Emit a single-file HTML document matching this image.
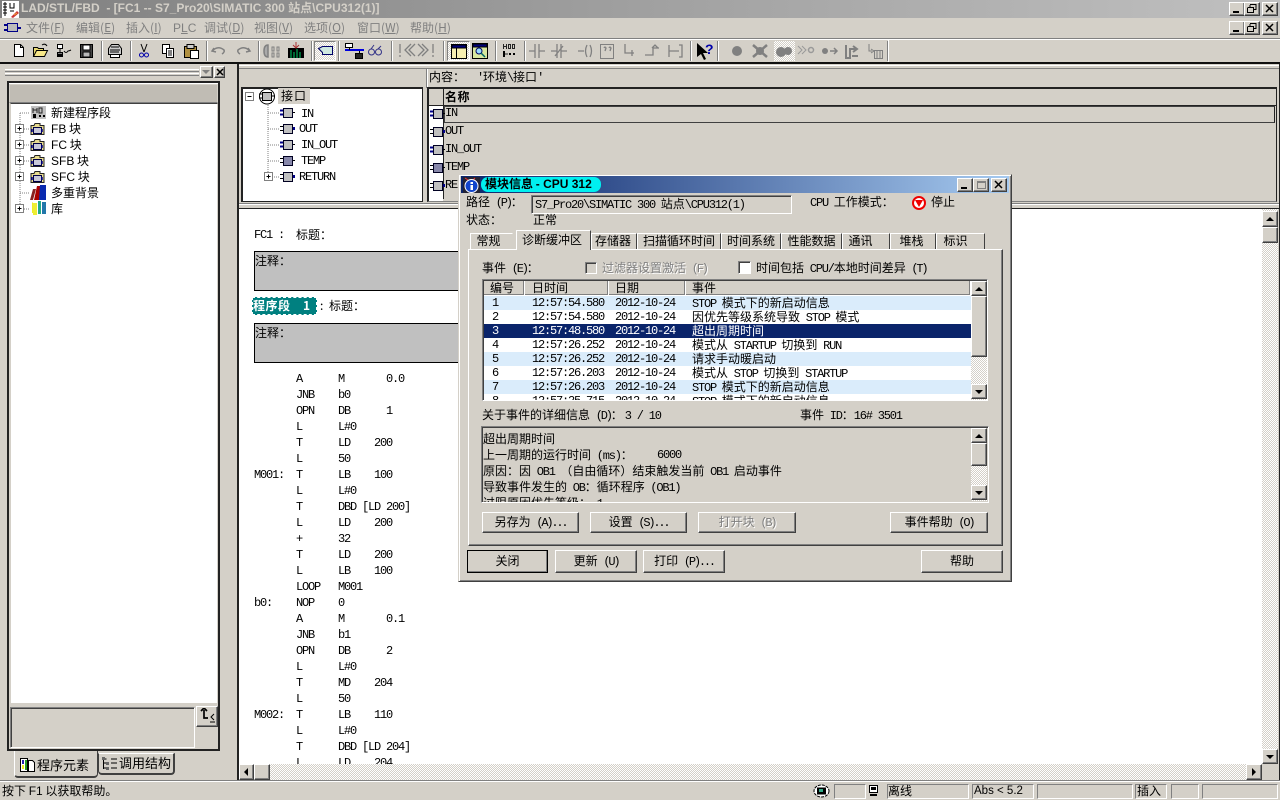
<!DOCTYPE html>
<html><head><meta charset="utf-8"><style>
html,body{margin:0;padding:0;width:1280px;height:800px;overflow:hidden;background:#d4d0c8}
body{position:relative;font:12px/16px "WenQuanYi Zen Hei","Noto Sans CJK SC","Liberation Sans",sans-serif;color:#000;word-spacing:3px}
div,span.a,svg.a{position:absolute;box-sizing:border-box}
.t{white-space:nowrap;line-height:16px;height:16px}
.m{font-family:"Liberation Mono",monospace;letter-spacing:-1.2px;word-spacing:0}
.n{font-family:"Liberation Mono",monospace;letter-spacing:-2.2px;word-spacing:0}
.s{font-family:"Liberation Sans",sans-serif;word-spacing:0}
.w0{word-spacing:0}
.r{background:#d4d0c8;border:1px solid;border-color:#fff #404040 #404040 #fff;box-shadow:inset -1px -1px #808080}
.k{border:1px solid;border-color:#808080 #fff #fff #808080;box-shadow:inset 1px 1px #404040}
.k1{border:1px solid;border-color:#808080 #fff #fff #808080}
.d{background:repeating-conic-gradient(#fff 0 25%,#d4d0c8 0 50%) 0 0/2px 2px}
.b{text-align:center;line-height:18px}
.g{color:#808080;text-shadow:1px 1px 0 #fff}
.menu{color:#808080}
.rw{left:484px;width:487px;height:14px;overflow:visible}
.rw .t{top:-1px}
.tab{border:1px solid;border-color:#fff #404040 transparent #fff;background:#d4d0c8;text-align:center;border-bottom:0;line-height:14px;white-space:nowrap}
.arrow{width:0;height:0;border:4px solid transparent}
.sep{width:2px;top:41px;height:20px;border-left:1px solid #808080;border-right:1px solid #fff}
.wb{width:16px;height:14px}
</style></head><body>

<!-- title bar -->
<div style="left:0;top:0;width:1280px;height:18px;background:linear-gradient(90deg,#808080,#c0c0c0)"></div>
<div class="t s" style="left:21px;top:0;color:#d4d0c8;font-weight:bold;font-size:12px">LAD/STL/FBD&nbsp; - [FC1 -- S7_Pro20\SIMATIC 300 <span style="font-family:'WenQuanYi Zen Hei','Noto Sans CJK SC',sans-serif">站点</span>\CPU312(1)]</div>
<svg class="a" style="left:2px;top:1px" width="17" height="17"><rect width="17" height="17" fill="#fff"/><path d="M1 3h4M1 6h4M1 9h4M1 12h4M3 1v14M8 2v5h4V2M8 10h4" stroke="#000" fill="none"/><path d="M9 16l6-6 2 2-6 5z" fill="#c33"/><path d="M12 14l3-2" stroke="#ea3"/></svg>
<!-- window buttons row 1 -->
<div class="r wb" style="left:1229px;top:2px"><div style="left:3px;top:8px;width:6px;height:2px;background:#000"></div></div>
<div class="r wb" style="left:1244px;top:2px"><svg class="a" style="left:2px;top:1px" width="10" height="9"><path d="M3 .5h6v5H7M1 3.500h5.500v5H.5v-5M3 1v2" fill="none" stroke="#000"/></svg></div>
<div class="r wb" style="left:1262px;top:2px"><svg class="a" style="left:2px;top:1px" width="10" height="9"><path d="M1 1l7 7M8 1l-7 7" stroke="#000" stroke-width="1.500"/></svg></div>
<!-- window buttons row 2 -->
<div class="r wb" style="left:1229px;top:21px"><div style="left:3px;top:8px;width:6px;height:2px;background:#000"></div></div>
<div class="r wb" style="left:1244px;top:21px"><svg class="a" style="left:2px;top:1px" width="10" height="9"><path d="M3 .5h6v5H7M1 3.500h5.500v5H.5v-5M3 1v2" fill="none" stroke="#000"/></svg></div>
<div class="r wb" style="left:1262px;top:21px"><svg class="a" style="left:2px;top:1px" width="10" height="9"><path d="M1 1l7 7M8 1l-7 7" stroke="#000" stroke-width="1.500"/></svg></div>

<!-- menu -->
<svg class="a" style="left:4px;top:21px" width="17" height="14"><path d="M0 4h3M0 9h3M14 7h3" stroke="#008" stroke-width="2"/><rect x="3.500" y="2.500" width="10" height="8" fill="#bbb" stroke="#008"/></svg>
<div class="t menu" style="left:26px;top:20px">文件(<u>F</u>)</div>
<div class="t menu" style="left:76px;top:20px">编辑(<u>E</u>)</div>
<div class="t menu" style="left:126px;top:20px">插入(<u>I</u>)</div>
<div class="t menu s" style="left:173px;top:20px;font-size:12px">P<u>L</u>C</div>
<div class="t menu" style="left:204px;top:20px">调试(<u>D</u>)</div>
<div class="t menu" style="left:254px;top:20px">视图(<u>V</u>)</div>
<div class="t menu" style="left:304px;top:20px">选项(<u>O</u>)</div>
<div class="t menu" style="left:357px;top:20px">窗口(<u>W</u>)</div>
<div class="t menu" style="left:410px;top:20px">帮助(<u>H</u>)</div>
<div style="left:0;top:38px;width:1280px;height:1px;background:#808080"></div>
<div style="left:0;top:39px;width:1280px;height:1px;background:#fff"></div>

<!-- toolbar -->
<div class="sep" style="left:101px"></div><div class="sep" style="left:130px"></div><div class="sep" style="left:206px"></div><div class="sep" style="left:258px"></div><div class="sep" style="left:311px"></div><div class="sep" style="left:338px"></div><div class="sep" style="left:391px"></div><div class="sep" style="left:443px"></div><div class="sep" style="left:495px"></div><div class="sep" style="left:524px"></div><div class="sep" style="left:690px"></div><div class="sep" style="left:717px"></div><div class="sep" style="left:887px"></div>
<div style="left:314px;top:41px;width:22px;height:20px;background:repeating-conic-gradient(#fff 0 25%,#d4d0c8 0 50%) 0 0/2px 2px;border:1px solid;border-color:#808080 #fff #fff #808080"></div>
<div style="left:447px;top:41px;width:23px;height:20px;background:repeating-conic-gradient(#fff 0 25%,#d4d0c8 0 50%) 0 0/2px 2px;border:1px solid;border-color:#808080 #fff #fff #808080"></div>
<div style="left:774px;top:41px;width:21px;height:20px;background:repeating-conic-gradient(#fff 0 25%,#d4d0c8 0 50%) 0 0/2px 2px"></div>
<svg class="a" style="left:0;top:40px" width="900" height="22">
<g fill="none" stroke="#000">
<path d="M14.500 4.500h6l3 3v9h-9z" fill="#fff"/><path d="M20.500 4.500v3h3"/>
<path d="M33.500 16.500v-9h4l1 1h5v8z" fill="#e8d870"/><path d="M33.500 16.500l3-6h11l-3 6z" fill="#f8e888"/><path d="M42 5q3-2 5 1" stroke="#000"/>
<path d="M57.500 4.500h5v4h-5zM57.500 12.500h5v4h-5z" fill="#fff"/><rect x="58" y="14" width="4" height="2" fill="#000"/><path d="M60 9v3M64 11q2 3 4 0q1 0 3-1"/>
<path d="M80.500 4.500h12v13h-12z" fill="#444"/><rect x="83" y="5" width="7" height="5" fill="#fff"/><rect x="83" y="12" width="7" height="5" fill="#b8b8b8"/>
<path d="M108.500 8.500l3-4h7l3 4v6h-13z" fill="#ccc"/><path d="M110.500 14.500h9v3h-9z" fill="#fff"/><path d="M111 7h8M110 10h10M110 12h9"/>
</g>
<path d="M141 4l3 8M147 4l-3 8" stroke="#000" fill="none"/><circle cx="141.500" cy="15" r="2" fill="none" stroke="#00a"/><circle cx="146.500" cy="15" r="2" fill="none" stroke="#00a"/>
<g fill="#fff" stroke="#000"><path d="M162.500 4.500h7v9h-7z"/><path d="M166.500 8.500h7v9h-7z"/><path d="M168 11h4M168 13h4M168 15h4" fill="none"/></g>
<g stroke="#000"><path d="M184.500 6.500h12v11h-12z" fill="#b09040"/><path d="M187 4.500h7v4h-7z" fill="#ccc"/><path d="M190.500 10.500h8v8h-8z" fill="#fff"/></g>
<g fill="none" stroke="#808080" stroke-width="1.500"><path d="M214 8l-2 3 4 1M212 11q6-6 12-1q1 2-2 4"/><path d="M248 8l2 3-4 1M250 11q-6-6-12-1q-1 2 2 4"/>
<path d="M268 5q-4 0-4 6t4 6z" fill="#aaa"/><path d="M272 7h2v4h-2zM277 7h2v4h-2zM272 13h2v4h-2zM277 13h2v4h-2z" stroke-width="1"/></g>
<g><rect x="288" y="8" width="16" height="10" fill="#000"/><path d="M291 10v8M294 12v6M297 9v9M300 12v6" stroke="#0c6"/><path d="M296 2v6M293 5l3 3 3-3" stroke="#a33" fill="none"/></g>
<path d="M318.500 8.500l4 4v2h10v-8h-10z" fill="#cfe8e0" stroke="#006"/>
<g stroke="#000"><rect x="345.500" y="3.500" width="7" height="4" fill="#fff"/><path d="M345 10h19" stroke="#00d" stroke-width="2"/><path d="M349.500 8v2M359.500 11v2"/><rect x="355.500" y="13.500" width="7" height="5" fill="#222"/></g>
<g fill="none" stroke="#338"><circle cx="371.500" cy="12" r="3"/><circle cx="378.500" cy="12" r="3"/><path d="M371 9l3-4M378 9l3-3M374 12h2"/></g>
<g fill="none" stroke="#808080" stroke-width="1.300"><path d="M400 4v9M400 15v2"/><path d="M411 4l-6 6 6 6M415 4l-6 6 6 6"/><path d="M422 4l6 6-6 6M418 4l6 6-6 6"/><path d="M433 4v9M433 15v2"/></g>
<g stroke="#000"><rect x="451.500" y="4.500" width="15" height="14" fill="#f8f0b0" stroke-width="1"/><rect x="452" y="5" width="14" height="3" fill="#00007a"/><path d="M456.500 8v10" /></g>
<g stroke="#000"><rect x="472.500" y="3.500" width="15" height="15" fill="#d8e8a0"/><rect x="473" y="4" width="14" height="3" fill="#00007a"/><circle cx="479" cy="11" r="3" fill="#9df" stroke="#006"/><path d="M481 13l4 4" stroke="#066" stroke-width="1.500"/></g>
<g stroke="#222" fill="none"><path d="M503.500 4v5M506.500 4v5M503.500 6.500h3M508.500 4.500h2v4h-2zM512.500 4.500h2v4h-2z"/><rect x="503" y="11" width="2" height="6" fill="#000" stroke="none"/><path d="M505 14h3"/><rect x="509" y="13" width="2" height="2" fill="#000" stroke="none"/><rect x="513" y="13" width="2" height="2" fill="#000" stroke="none"/></g>
<g stroke="#808080" fill="none" stroke-width="1.300"><path d="M529 11h6M535 4v14M539 4v14M539 11h6"/><path d="M551 11h6M557 4v14M561 4v14M561 11h6M555 16l8-10"/><path d="M578 11h6M587 5q-3 6 0 12M590 5q3 6 0 12"/><rect x="600.500" y="4.500" width="13" height="14" stroke-width="1"/><path d="M604 8q1-2 2 0l-1 3M609 8q1-2 2 0l-1 3"/><path d="M625 4v9h9M632 10v6"/><path d="M645 15h8v-7h6M652 8l3-3 3 3"/><path d="M669 5v12M669 11h10M679 5h3v12h-3"/></g>
<g><path d="M697 3v14l4-3 3 6 2-1-3-6 5 0z" fill="#000"/><text x="705" y="14" font-family="Liberation Sans" font-weight="bold" font-size="14" fill="#00a">?</text></g>
<g fill="#808080"><circle cx="737" cy="11" r="5"/><path d="M753 5l14 12M767 5l-14 12" stroke="#808080" stroke-width="2.500"/><circle cx="760" cy="11" r="4"/><circle cx="781" cy="12" r="5"/><circle cx="788" cy="11" r="4"/><path d="M798 6l4 4-4 4M802 6l4 4-4 4" fill="none" stroke="#999"/><circle cx="811" cy="10" r="2.500" fill="none" stroke="#999" stroke-width="1.500"/><circle cx="825" cy="11" r="3"/><path d="M830 11h7M834 8l3 3-3 3" fill="none" stroke="#808080" stroke-width="1.500"/><path d="M846 5v13h4v-9h6M853 6l4 3-4 3M852 16h6" fill="none" stroke="#808080" stroke-width="2"/><path d="M869 4v7h3M871 9l3 2-3 2" fill="none" stroke="#808080"/></g><rect x="874.500" y="10.500" width="8" height="8" fill="#d4d0c8" stroke="#808080"/><path d="M877 11v7M880 11v7" stroke="#808080"/>
</svg>
<div style="left:0;top:62px;width:1280px;height:2px;background:#101010"></div>
<div style="left:888px;top:40px;width:1px;height:22px;background:#fff"></div>

<!-- left dock -->
<div style="left:5px;top:69px;width:194px;height:3px;border-top:1px solid #fff;border-bottom:1px solid #808080"></div>
<div style="left:5px;top:73px;width:194px;height:3px;border-top:1px solid #fff;border-bottom:1px solid #808080"></div>
<div class="r" style="left:200px;top:66px;width:13px;height:12px"><div class="arrow" style="left:1px;top:3px;border-width:4px 4px 0;border-top-color:#808080;border-bottom:0"></div></div>
<div class="r" style="left:214px;top:66px;width:11px;height:12px"><svg class="a" style="left:1px;top:1px" width="8" height="8"><path d="M1 1l6 6M7 1l-6 6" stroke="#000" stroke-width="1.500"/></svg></div>
<div style="left:7px;top:81px;width:213px;height:670px;border:2px solid #222;background:#d4d0c8"></div>
<div style="left:9px;top:83px;width:209px;height:1px;background:#fff"></div>
<div style="left:9px;top:84px;width:209px;height:19px;background:#c0bcb4;border:1px solid #d4d0c8;border-bottom-color:#808080"></div>
<div style="left:10px;top:103px;width:208px;height:602px;background:#fff;border:1px solid #d4d0c8;border-top-color:#404040;border-bottom:2px solid #d4d0c8"></div>
<div class="k1" style="left:10px;top:707px;width:185px;height:41px;box-shadow:inset 1px 1px #404040"></div>
<div class="r" style="left:196px;top:706px;width:22px;height:21px"></div>
<svg class="a" style="left:198px;top:708px" width="18" height="16"><path d="M3 3l3-3 3 3M6 2v8h4" fill="none" stroke="#000" stroke-width="1.700"/><path d="M16 6l-3 3 3 3M12 14h5" fill="none" stroke="#000"/></svg>

<!-- left tree -->
<svg class="a" style="left:0;top:100px" width="120" height="120">
<defs>
<g id="fol"><path d="M0 3.500h3l1-2h5v2h4v9H0z" fill="#e8dc90" stroke="#222"/><rect x="2.500" y="5.500" width="8" height="6" fill="#c8c8d8" stroke="#004"/><path d="M1 7v3M11 7v3" stroke="#008" stroke-width="1.500"/></g>
<g id="pl"><rect x="15.500" y="24.500" width="8" height="8" fill="#fff" stroke="#808080"/><path d="M17.500 28.500h4M19.500 26.500v4" stroke="#000"/></g>
</defs>
<path d="M20 13v96M20 13h10M24 29h6M24 45h6M24 61h6M20 93h10M24 109h6" stroke="#808080" stroke-dasharray="1 1" fill="none"/>
<g><rect x="31" y="6" width="15" height="13" fill="#c0c0c0"/><path d="M33 8v5M37 8v5M33 10h4M39 8h3v5h-3z" stroke="#222" fill="none"/><rect x="33" y="14" width="3" height="4" fill="#000"/><rect x="39" y="15" width="2" height="2" fill="#000"/><rect x="43" y="15" width="2" height="2" fill="#000"/></g>
<use href="#pl" y="0"/><use href="#pl" y="16"/><use href="#pl" y="32"/><use href="#pl" y="48"/><use href="#pl" y="80"/>
<use href="#fol" x="31" y="22"/><use href="#fol" x="31" y="38"/><use href="#fol" x="31" y="54"/><use href="#fol" x="31" y="70"/>
<g transform="translate(0,14)"><path d="M30 86l3-11h3l-3 11z" fill="#822"/><path d="M34 86l3-14h4v14z" fill="#a00"/><path d="M39 86l1-15h6v15z" fill="#0a2ab0"/></g>
<g transform="translate(0,1)"><path d="M32 101l2 2v9h-2z" fill="#ee2"/><rect x="33" y="102" width="4" height="12" fill="#ee3"/><rect x="38" y="100" width="3" height="13" fill="#2a8"/><rect x="42" y="101" width="4" height="12" fill="#27a"/></g>
</svg>
<div class="t" style="left:51px;top:105px">新建程序段</div>
<div class="t w0" style="left:51px;top:121px"><span class="s">FB</span> 块</div>
<div class="t w0" style="left:51px;top:137px"><span class="s">FC</span> 块</div>
<div class="t w0" style="left:51px;top:153px"><span class="s">SFB</span> 块</div>
<div class="t w0" style="left:51px;top:169px"><span class="s">SFC</span> 块</div>
<div class="t" style="left:51px;top:185px">多重背景</div>
<div class="t" style="left:51px;top:201px">库</div>

<!-- left tabs -->
<div style="left:98px;top:753px;width:77px;height:22px;background:#d4d0c8;border:1px solid #404040;border-top:1px solid #fff;border-right:2px solid #404040;border-bottom:2px solid #404040;border-radius:0 0 4px 4px"></div>
<div style="left:14px;top:751px;width:84px;height:27px;background:#d4d0c8;border-left:1px solid #fff;border-right:1px solid #404040;border-bottom:2px solid #404040;border-radius:0 0 4px 4px"></div>
<svg class="a" style="left:19px;top:757px" width="17" height="16"><path d="M1.500 1.500h7v13h-7z" fill="#fff" stroke="#000"/><rect x="3" y="3" width="2" height="4" fill="#22a"/><rect x="3" y="8" width="2" height="4" fill="#ee2"/><rect x="6" y="3" width="2" height="10" fill="#292"/><path d="M9.500 3.500h4l2 2v9h-6z" fill="#fff" stroke="#000"/></svg>
<div class="t" style="left:37px;top:757px;font-size:13px">程序元素</div>
<svg class="a" style="left:101px;top:756px" width="17" height="15" fill="none" stroke="#000"><path d="M2.500 1v12M2.500 3h3M2.500 7h3M2.500 12h3"/><rect x="1" y="1" width="3" height="3" fill="#666" stroke="none"/><rect x="5" y="6" width="3" height="3" fill="#666" stroke="none"/><rect x="5" y="11" width="3" height="3" fill="#666" stroke="none"/><path d="M10 3h6M10 7h6M10 12h6"/></svg>
<div class="t" style="left:119px;top:755px;font-size:13px">调用结构</div>

<!-- center frame -->
<div style="left:237px;top:64px;width:1043px;height:716px;border-left:2px solid #222;border-right:1px solid #222"></div>
<div style="left:239px;top:65px;width:1040px;height:1px;background:#fff"></div>
<div style="left:239px;top:68px;width:1040px;height:1px;background:#808080"></div>
<div style="left:426px;top:69px;width:2px;height:19px;border-left:1px solid #808080;border-right:1px solid #fff"></div>
<div class="t" style="left:429px;top:69px">内容：</div>
<div class="t" style="left:477px;top:69px"><span class="m">'</span>环境<span class="m">\</span>接口<span class="m">'</span></div>
<div style="left:241px;top:87px;width:182px;height:115px;background:#fff;border:1px solid #222;border-top-width:2px;border-left-width:2px"></div>
<div style="left:427px;top:87px;width:850px;height:115px;background:#d4d0c8;border:1px solid #222;border-top:2px solid #222;border-left:2px solid #222;border-bottom:1px solid #808080"></div>
<div style="left:429px;top:105px;width:847px;height:1px;background:#222"></div>
<div style="left:443px;top:89px;width:1px;height:110px;background:#222"></div>
<div style="left:429px;top:106px;width:14px;height:95px;background:#fff"></div>
<div style="left:444px;top:106px;width:831px;height:17px;border:1px solid #404040;border-right:1px solid #222"></div>
<div class="t" style="left:445px;top:89px;font-weight:bold;letter-spacing:.5px">名称</div>
<div class="t m" style="left:445px;top:105px">IN</div>
<div class="t m" style="left:445px;top:123px">OUT</div>
<div class="t m" style="left:445px;top:141px">IN_OUT</div>
<div class="t m" style="left:445px;top:159px">TEMP</div>
<div class="t m" style="left:445px;top:177px">RE</div>

<!-- interface tree -->
<div style="left:278px;top:88px;width:32px;height:16px;background:#d4d0c8"></div>
<div class="t" style="left:281px;top:88px;letter-spacing:1px">接口</div>
<div class="t m" style="left:301px;top:106px">IN</div>
<div class="t m" style="left:299px;top:121px">OUT</div>
<div class="t m" style="left:301px;top:137px">IN_OUT</div>
<div class="t m" style="left:301px;top:153px">TEMP</div>
<div class="t m" style="left:299px;top:169px">RETURN</div>
<svg class="a" style="left:240px;top:88px" width="205" height="106">
<defs>
<g id="pi"><path d="M0 2.500h3M0 6.500h3" stroke="#008" stroke-width="2"/><path d="M12 4.500h3" stroke="#000"/><rect x="3.500" y=".5" width="9" height="9" fill="#c0c0c0" stroke="#002"/></g>
<g id="po"><path d="M0 2.500h3M0 6.500h3" stroke="#000"/><path d="M12 4.500h3" stroke="#008" stroke-width="3"/><rect x="3.500" y=".5" width="9" height="9" fill="#c0c0c0" stroke="#002"/></g>
<g id="pt"><path d="M0 2.500h3M0 6.500h3" stroke="#000"/><path d="M12 4.500h3" stroke="#000"/><rect x="3.500" y=".5" width="9" height="9" fill="#88a" stroke="#002"/></g>
</defs>
<rect x="5.500" y="4.500" width="8" height="8" fill="#fff" stroke="#808080"/><path d="M7.500 8.500h4" stroke="#000"/>
<circle cx="27" cy="8.500" r="7.500" fill="none" stroke="#000"/><rect x="22.500" y="4.500" width="9" height="8" fill="#c0c0c0" stroke="#000"/><path d="M19 6h3M19 10h3M32 8h3" stroke="#000"/>
<path d="M28 17v72M28 25h12M28 41h12M28 57h12M28 73h12M32 89h8" stroke="#808080" stroke-dasharray="1 1"/>
<rect x="24.500" y="84.500" width="8" height="8" fill="#fff" stroke="#808080"/><path d="M26.500 88.500h4M28.500 86.500v4" stroke="#000"/>
<use href="#pi" x="40" y="20"/><use href="#po" x="40" y="36"/><use href="#pi" x="40" y="52"/><use href="#pt" x="40" y="68"/><use href="#po" x="40" y="84"/>
<use href="#pi" x="190" y="21"/><use href="#po" x="190" y="39"/><use href="#pi" x="190" y="57"/><use href="#pt" x="190" y="75"/><use href="#po" x="190" y="93"/>
</svg>

<!-- editor -->
<div style="left:239px;top:203px;width:1040px;height:1px;background:#808080"></div>
<div style="left:239px;top:204px;width:1040px;height:1px;background:#fff"></div>
<div style="left:239px;top:208px;width:1040px;height:1px;background:#222"></div>
<div style="left:239px;top:209px;width:1023px;height:555px;background:#fff;overflow:hidden" id="ed">
<div class="t m" style="left:15px;top:18px">FC1 :</div><div class="t" style="left:57px;top:18px">标题：</div>
<div style="left:15px;top:42px;width:300px;height:40px;background:#c0c0c0;border:1px solid #000"></div>
<div class="t" style="left:16px;top:44px">注释：</div>
<div style="left:13px;top:88px;width:65px;height:18px;background:#008080;border:1px dashed #fff"></div>
<div class="t" style="left:14px;top:89px;color:#fff;font-weight:bold;letter-spacing:.5px">程序段&nbsp; 1</div>
<div class="t" style="left:81px;top:89px">:&nbsp;标题：</div>
<div style="left:15px;top:114px;width:300px;height:40px;background:#c0c0c0;border:1px solid #000"></div>
<div class="t" style="left:16px;top:116px">注释：</div>
<pre class="m" style="position:absolute;left:15px;top:162px;margin:0;font-size:12px;line-height:16px">       A      M       0.0
       JNB    b0
       OPN    DB      1
       L      L#0
       T      LD    200
       L      50
M001:  T      LB    100
       L      L#0
       T      DBD [LD 200]
       L      LD    200
       +      32
       T      LD    200
       L      LB    100
       LOOP   M001
b0:    NOP    0
       A      M       0.1
       JNB    b1
       OPN    DB      2
       L      L#0
       T      MD    204
       L      50
M002:  T      LB    110
       L      L#0
       T      DBD [LD 204]
       L      LD    204</pre>
</div>
<!-- v scrollbar -->
<div class="d" style="left:1262px;top:209px;width:16px;height:555px"></div>
<div class="r" style="left:1262px;top:211px;width:16px;height:16px"><div class="arrow" style="left:3px;top:5px;border-width:0 4px 4px;border-bottom-color:#000"></div></div>
<div class="r" style="left:1262px;top:227px;width:16px;height:16px"></div>
<div class="r" style="left:1262px;top:749px;width:16px;height:15px"><div class="arrow" style="left:3px;top:5px;border-width:4px 4px 0;border-top-color:#000"></div></div>
<!-- h scrollbar -->
<div class="d" style="left:239px;top:764px;width:1023px;height:16px"></div>
<div class="r" style="left:239px;top:764px;width:15px;height:16px"><div class="arrow" style="left:4px;top:3px;border-width:4px 4px 4px 0;border-right-color:#000"></div></div>
<div class="r" style="left:254px;top:764px;width:16px;height:16px"></div>
<div class="r" style="left:1246px;top:764px;width:16px;height:16px"><div class="arrow" style="left:5px;top:3px;border-width:4px 0 4px 4px;border-left-color:#000"></div></div>

<!-- status bar -->
<div style="left:0;top:780px;width:1280px;height:1px;background:#808080"></div>
<div style="left:0;top:781px;width:1280px;height:19px;background:#d4d0c8;border-top:1px solid #fff"></div>
<div class="t w0" style="left:2px;top:783px">按下 <span class="s">F1</span> 以获取帮助。</div>
<svg class="a" style="left:813px;top:784px" width="17" height="14"><ellipse cx="8.500" cy="7" rx="7.500" ry="6" fill="#fff" stroke="#000" stroke-dasharray="3 1"/><rect x="4" y="3.500" width="9" height="7" fill="#000"/><rect x="6" y="5" width="4" height="3" fill="#3a8"/></svg>
<div class="k1" style="left:834px;top:784px;width:32px;height:15px"></div>
<svg class="a" style="left:869px;top:785px" width="10" height="12"><rect x=".5" y=".5" width="8" height="7" fill="#fff" stroke="#000"/><rect x="2" y="2" width="5" height="3" fill="#000"/><path d="M1 10h7" stroke="#000" stroke-width="2"/></svg>
<div class="k1" style="left:887px;top:784px;width:82px;height:15px"></div><div class="t" style="left:888px;top:783px;font-size:12px">离线</div>
<div class="k1" style="left:972px;top:784px;width:62px;height:15px"></div><div class="t s" style="left:974px;top:783px;font-size:11.500px">Abs &lt; 5.2</div>
<div class="k1" style="left:1037px;top:784px;width:96px;height:15px"></div>
<div class="k1" style="left:1135px;top:784px;width:32px;height:15px"></div><div class="t" style="left:1137px;top:783px">插入</div>
<div class="k1" style="left:1171px;top:784px;width:28px;height:15px"></div>
<div class="k1" style="left:1202px;top:784px;width:76px;height:15px"></div>

<!-- DIALOG -->
<div style="left:458px;top:174px;width:554px;height:408px;background:#d4d0c8;border:1px solid;border-color:#d4d0c8 #404040 #404040 #d4d0c8;box-shadow:inset 1px 1px #fff,inset -1px -1px #808080"></div>
<div style="left:461px;top:176px;width:548px;height:17px;background:linear-gradient(90deg,#0a246a,#a6caf0)"></div>
<svg class="a" style="left:463px;top:177px" width="17" height="16"><rect width="17" height="16" fill="#223"/><path d="M2 1l3 2M12 1l-2 2" stroke="#e33"/><circle cx="8.500" cy="9" r="6.500" fill="#14c" stroke="#fff"/><rect x="7.500" y="5" width="2.500" height="2" fill="#fff"/><rect x="7.500" y="8" width="2.500" height="5" fill="#fff"/></svg>
<div style="left:481px;top:177px;width:120px;height:15px;background:#00f0f0;border-radius:7px"></div>
<div class="t w0" style="left:485px;top:176px;font-weight:bold">模块信息 <span class="s"> - CPU 312</span></div>
<div class="r wb" style="left:957px;top:178px"><div style="left:3px;top:8px;width:6px;height:2px;background:#000"></div></div>
<div class="r wb" style="left:973px;top:178px"><div style="left:3px;top:2px;width:9px;height:8px;border:1px solid #808080;border-top-width:2px"></div></div>
<div class="r wb" style="left:991px;top:178px"><svg class="a" style="left:2px;top:1px" width="10" height="9"><path d="M1 1l7 7M8 1l-7 7" stroke="#000" stroke-width="1.500"/></svg></div>

<div class="t" style="left:466px;top:194px">路径 <span class="n">(P)</span>：</div>
<div class="k" style="left:531px;top:195px;width:261px;height:19px"></div>
<div class="t" style="left:535px;top:196px"><span class="m">S7_Pro20\SIMATIC 300</span> 站点<span class="m">\CPU312(1)</span></div>
<div class="t" style="left:810px;top:194px"><span class="m">CPU</span> 工作模式：</div>
<svg class="a" style="left:912px;top:196px" width="14" height="14"><circle cx="7" cy="7" r="6" fill="#fff" stroke="#e00" stroke-width="2"/><path d="M3 4h8l-4 7z" fill="#e00"/></svg>
<div class="t" style="left:931px;top:194px">停止</div>
<div class="t" style="left:466px;top:212px">状态：</div>
<div class="t" style="left:533px;top:212px">正常</div>

<!-- tabs -->
<div style="left:468px;top:249px;width:535px;height:297px;background:#d4d0c8;border:1px solid;border-color:#fff #404040 #404040 #fff;box-shadow:inset -1px -1px #808080"></div>
<div class="tab" style="left:470px;top:233px;width:43px;height:16px;border-right-color:transparent;border-top-color:#fff;padding-right:6px">常规</div>
<div class="tab" style="left:591px;top:233px;width:46px;height:16px;padding-right:2px">存储器</div>
<div class="tab" style="left:637px;top:233px;width:84px;height:16px">扫描循环时间</div>
<div class="tab" style="left:721px;top:233px;width:60px;height:16px">时间系统</div>
<div class="tab" style="left:781px;top:233px;width:61px;height:16px">性能数据</div>
<div class="tab" style="left:842px;top:233px;width:48px;height:16px;padding-right:11px">通讯</div>
<div class="tab" style="left:890px;top:233px;width:46px;height:16px;padding-right:3px">堆栈</div>
<div class="tab" style="left:936px;top:233px;width:49px;height:16px;padding-right:10px">标识</div>
<div class="tab" style="left:516px;top:230px;width:75px;height:20px;line-height:17px;z-index:2;padding-right:3px">诊断缓冲区</div>

<div class="t" style="left:482px;top:260px">事件 <span class="n">(E)</span>：</div>
<div class="k" style="left:585px;top:262px;width:12px;height:12px;background:#d4d0c8"></div>
<div class="t g" style="left:602px;top:260px">过滤器设置激活 <span class="n">(F)</span></div>
<div class="k" style="left:738px;top:261px;width:13px;height:13px;background:#fff"></div>
<div class="t" style="left:756px;top:260px">时间包括 <span class="m">CPU/</span>本地时间差异 <span class="n">(T)</span></div>

<!-- list -->
<div class="k" style="left:482px;top:279px;width:506px;height:122px;background:#fff"></div>
<div class="d" style="left:971px;top:281px;width:16px;height:119px"></div>
<div style="left:484px;top:281px;width:487px;height:14px;background:#d4d0c8;border-bottom:1px solid #808080"></div>
<div style="left:523px;top:281px;width:2px;height:14px;border-left:1px solid #808080;border-right:1px solid #fff"></div>
<div style="left:607px;top:281px;width:2px;height:14px;border-left:1px solid #808080;border-right:1px solid #fff"></div>
<div style="left:684px;top:281px;width:2px;height:14px;border-left:1px solid #808080;border-right:1px solid #fff"></div>
<div style="left:969px;top:281px;width:2px;height:14px;border-left:1px solid #808080;border-right:1px solid #fff"></div>
<div class="t" style="left:490px;top:280px">编号</div><div class="t" style="left:532px;top:280px">日时间</div><div class="t" style="left:615px;top:280px">日期</div><div class="t" style="left:692px;top:280px">事件</div>

<div class="rw" style="top:296px;background:#daecfb"><div class="t m" style="left:8px">1</div><div class="t m" style="left:48px">12:57:54.580</div><div class="t m" style="left:131px">2012-10-24</div><div class="t" style="left:208px"><span class="m">STOP</span> 模式下的新启动信息</div></div>
<div class="rw" style="top:310px;background:#fff"><div class="t m" style="left:8px">2</div><div class="t m" style="left:48px">12:57:54.580</div><div class="t m" style="left:131px">2012-10-24</div><div class="t" style="left:208px">因优先等级系统导致 <span class="m">STOP</span> 模式</div></div>
<div class="rw" style="top:324px;background:#0a246a;color:#fff"><div class="t m" style="left:8px">3</div><div class="t m" style="left:48px">12:57:48.580</div><div class="t m" style="left:131px">2012-10-24</div><div class="t" style="left:208px">超出周期时间</div></div>
<div class="rw" style="top:338px;background:#fff"><div class="t m" style="left:8px">4</div><div class="t m" style="left:48px">12:57:26.252</div><div class="t m" style="left:131px">2012-10-24</div><div class="t" style="left:208px">模式从 <span class="m">STARTUP</span> 切换到 <span class="m">RUN</span></div></div>
<div class="rw" style="top:352px;background:#daecfb"><div class="t m" style="left:8px">5</div><div class="t m" style="left:48px">12:57:26.252</div><div class="t m" style="left:131px">2012-10-24</div><div class="t" style="left:208px">请求手动暖启动</div></div>
<div class="rw" style="top:366px;background:#fff"><div class="t m" style="left:8px">6</div><div class="t m" style="left:48px">12:57:26.203</div><div class="t m" style="left:131px">2012-10-24</div><div class="t" style="left:208px">模式从 <span class="m">STOP</span> 切换到 <span class="m">STARTUP</span></div></div>
<div class="rw" style="top:380px;background:#daecfb"><div class="t m" style="left:8px">7</div><div class="t m" style="left:48px">12:57:26.203</div><div class="t m" style="left:131px">2012-10-24</div><div class="t" style="left:208px"><span class="m">STOP</span> 模式下的新启动信息</div></div>
<div style="left:484px;top:394px;width:487px;height:6px;background:#fff;overflow:hidden"><div class="t m" style="left:8px;top:-1px">8</div><div class="t m" style="left:48px;top:-1px">12:57:25.715</div><div class="t m" style="left:131px;top:-1px">2012-10-24</div><div class="t" style="left:208px;top:-1px"><span class="m">STOP</span> 模式下的新启动信息</div></div>
<div class="r" style="left:971px;top:281px;width:16px;height:15px"><div class="arrow" style="left:3px;top:5px;border-width:0 4px 4px;border-bottom-color:#000"></div></div>
<div class="r" style="left:971px;top:296px;width:16px;height:61px"></div>
<div class="r" style="left:971px;top:384px;width:16px;height:15px"><div class="arrow" style="left:3px;top:5px;border-width:4px 4px 0;border-top-color:#000"></div></div>

<!-- detail -->
<div class="t" style="left:482px;top:407px">关于事件的详细信息 <span class="n">(D)</span>：<span class="m" style="margin-left:2px">3 / 10</span></div>
<div class="t" style="left:800px;top:407px">事件 <span class="m">ID</span>：<span class="m">16# 3501</span></div>
<div class="k" style="left:481px;top:426px;width:508px;height:77px;background:#d4d0c8;overflow:hidden">
<div class="t" style="left:1px;top:4px">超出周期时间</div>
<div class="t" style="left:1px;top:20px">上一周期的运行时间 <span class="m">(ms)</span>：</div>
<div class="t m" style="left:175px;top:20px">6000</div>
<div class="t" style="left:1px;top:36px">原因：因 <span class="m">OB1</span> （自由循环）结束触发当前 <span class="m">OB1</span> 启动事件</div>
<div class="t" style="left:1px;top:52px">导致事件发生的 <span class="m">OB</span>：循环程序 <span class="m">(OB1)</span></div>
<div class="t" style="left:1px;top:68px">过限原因优先等级： <span class="m">1</span></div>
</div>
<div class="d" style="left:971px;top:428px;width:16px;height:73px"></div>
<div class="r" style="left:971px;top:428px;width:16px;height:15px"><div class="arrow" style="left:3px;top:5px;border-width:0 4px 4px;border-bottom-color:#000"></div></div>
<div class="r" style="left:971px;top:443px;width:16px;height:23px"></div>
<div class="r" style="left:971px;top:485px;width:16px;height:15px"><div class="arrow" style="left:3px;top:5px;border-width:4px 4px 0;border-top-color:#000"></div></div>

<!-- buttons -->
<div class="r b" style="left:482px;top:512px;width:97px;height:21px">另存为 <span class="n">(A)...</span></div>
<div class="r b" style="left:590px;top:512px;width:97px;height:21px">设置 <span class="n">(S)...</span></div>
<div class="r b g" style="left:698px;top:512px;width:98px;height:21px">打开块 <span class="n">(B)</span></div>
<div class="r b" style="left:890px;top:512px;width:98px;height:21px">事件帮助 <span class="n">(O)</span></div>
<div class="r b" style="left:467px;top:550px;width:81px;height:23px;outline:1px solid #000;outline-offset:-1px;line-height:19px">关闭</div>
<div class="r b" style="left:555px;top:550px;width:82px;height:23px;line-height:19px">更新 <span class="n">(U)</span></div>
<div class="r b" style="left:643px;top:550px;width:82px;height:23px;line-height:19px">打印 <span class="n">(P)...</span></div>
<div class="r b" style="left:921px;top:550px;width:82px;height:23px;line-height:19px">帮助</div>
</body></html>
